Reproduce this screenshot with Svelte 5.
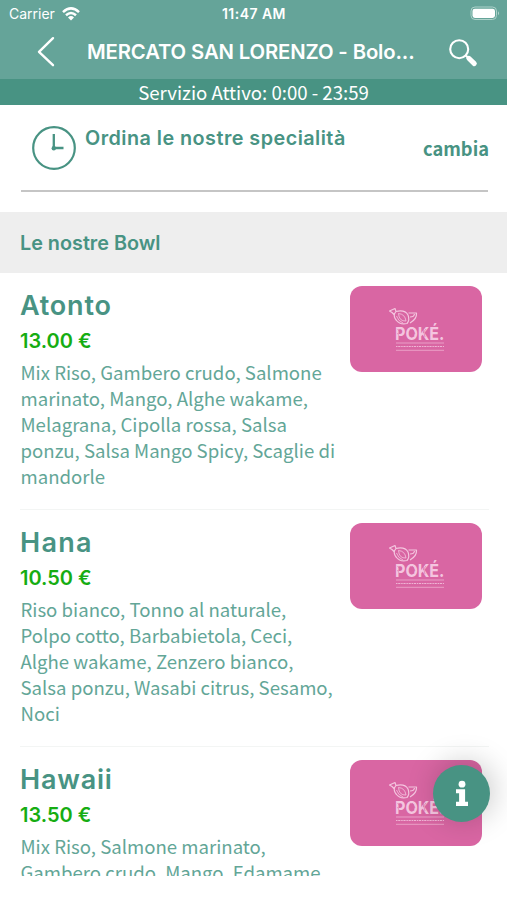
<script>
  const dishes = [
    {
      name: 'Atonto', price: '13.00 €', nameSpacing: 0.8,
      lines: ['Mix Riso, Gambero crudo, Salmone', 'marinato, Mango, Alghe wakame,', 'Melagrana, Cipolla rossa, Salsa', 'ponzu, Salsa Mango Spicy, Scaglie di', 'mandorle']
    },
    {
      name: 'Hana', price: '10.50 €', nameSpacing: 1.3,
      lines: ['Riso bianco, Tonno al naturale,', 'Polpo cotto, Barbabietola, Ceci,', 'Alghe wakame, Zenzero bianco,', 'Salsa ponzu, Wasabi citrus, Sesamo,', 'Noci']
    },
    {
      name: 'Hawaii', price: '13.50 €', nameSpacing: 0.8,
      lines: ['Mix Riso, Salmone marinato,', 'Gambero crudo, Mango, Edamame']
    }
  ];
</script>

<div class="screen">
  <header>
    <div class="status">
      <span class="carrier">Carrier</span>
      <svg class="wifi" width="18" height="14" viewBox="0 0 18 14" fill="none" stroke="#fff" stroke-width="2.5">
        <path d="M1 5.1Q9-2.3 17 5.1M4 8.3Q9 3.8 14 8.3" />
        <path d="M6 10.4Q9 7.8 12 10.4L9 13.5Z" fill="#fff" stroke="none" />
      </svg>
      <span class="time">11:47 AM</span>
      <svg class="battery" width="30" height="15" viewBox="0 0 30 15">
        <rect x="1" y="1" width="25.5" height="12.5" rx="4" fill="none" stroke="#add2ca" stroke-width="1" />
        <rect x="2.5" y="2.7" width="22.5" height="9.2" rx="2.4" fill="#fff" />
        <path d="M28 5.2Q30 7.3 28 9.3Z" fill="#b4d6ce" />
      </svg>
    </div>
    <div class="nav">
      <svg class="back" width="18" height="31" viewBox="0 0 18 31" fill="none" stroke="#fff" stroke-width="2.4" stroke-linecap="round" stroke-linejoin="round">
        <path d="M16 2.2L2 15.8L16 29.2" />
      </svg>
      <h1>MERCATO SAN LORENZO - Bolo...</h1>
      <svg class="search" width="30" height="30" viewBox="0 0 30 30" fill="none" stroke="#fff">
        <circle cx="11.2" cy="11.2" r="9" stroke-width="2.1" />
        <path d="M17.8 17.5L21 20.5" stroke-width="2.2" />
        <path d="M20.8 20.3L26.3 25.6" stroke-width="5" stroke-linecap="round" />
      </svg>
    </div>
    <div class="service"><span>Servizio Attivo: 0:00 - 23:59</span></div>
  </header>

  <main>
    <section class="order">
      <svg class="clock" width="46" height="46" viewBox="0 0 46 46" fill="none" stroke="#489383">
        <circle cx="23" cy="23" r="20.8" stroke-width="2.2" />
        <path d="M22.8 9V23H32.5" stroke-width="2.3" />
        <circle cx="22.8" cy="23.2" r="2.2" fill="#489383" stroke="none" />
      </svg>
      <strong>Ordina le nostre specialità</strong>
      <span class="change">cambia</span>
    </section>
    <h2><span>Le nostre Bowl</span></h2>
    {#each dishes as dish}
      <article>
        <div class="details">
          <h3 style:letter-spacing="{dish.nameSpacing}px">{dish.name}</h3>
          <div class="price">{dish.price}</div>
          <p>{#each dish.lines as line}<span>{line}</span>{/each}</p>
        </div>
        <div class="thumb">
          <svg width="132" height="86" viewBox="0 0 132 86">
            <g fill="none" stroke="#f4c5df" stroke-width="1.2" stroke-linejoin="round">
              <path d="M39.5 25L45 22.5L46 25.5L44 28.5L42 26.5Z" />
              <path d="M46 25.5Q55 23.5 58 29Q60 34 57 37.5Q50 39 46.5 34.5Q43.5 31 44.5 28" />
              <path d="M48.5 27.5Q55 28 56 35Q49 35.5 48.5 27.5M46.5 30Q48 35 53 37" stroke-width=".8" />
              <path d="M58.5 27H66.5Q67 33 60 37M60 31Q64 31 64.5 28" />
            </g>
            <text class="brand" x="45" y="54.3" textLength="49.5" lengthAdjust="spacingAndGlyphs">POKÉ.</text>
            <path d="M47.5 43L50 46M47.5 47L49 50M60 43L64 51M62 43L65 48M73 43L75 51M76 43L73 47" stroke="#d966a3" stroke-width=".6" />
            <path d="M46 57H94M46 64.3H94" stroke="#efadd0" stroke-width=".8" />
            <path d="M46 60.5H94" stroke="#efb5d5" stroke-width="1.2" stroke-dasharray="1.5 .7 2.2 .8" />
          </svg>
        </div>
      </article>
    {/each}
  </main>
  <button class="info" aria-label="Info">
    <svg width="14" height="27" viewBox="0 0 14 27" fill="#fff">
      <circle cx="7" cy="4.2" r="3.4" />
      <path d="M1 9.3H10.1V21.7H13V26H1V21.7H4.1V13.3H1Z" />
    </svg>
  </button>
</div>

<style>
  :global(body) { margin: 0; background: #fff; }
  .screen { position: relative; width: 507px; height: 900px; overflow: hidden; background: #fff; color: #489383; font-family: "Noto Sans CJK SC", "Noto Sans", sans-serif; }
  h1, h2, h3, p { margin: 0; }
  header { height: 105px; background: #65a499; color: #fff; }
  .status { display: flex; height: 28px; align-items: center; box-sizing: border-box; padding: 0 7px 0 9px; font: 14px/28px Inter, sans-serif; }
  .carrier { width: 53px; white-space: nowrap; }
  .wifi { margin-top: -1px; }
  .time { margin-left: 142px; font-size: 14px; font-weight: 600; letter-spacing: .45px; white-space: nowrap; }
  .battery { margin-left: auto; margin-top: -1px; }
  .nav { display: flex; height: 51px; align-items: center; }
  .back { margin: -4px 0 0 37px; }
  h1 { width: 330px; margin-left: 32px; padding-bottom: 4px; font: 600 20.3px/30px Inter, sans-serif; letter-spacing: -.13px; white-space: nowrap; box-sizing: border-box; margin-top: 1px; }
  .search { margin: -1px 0 0 31px; }
  .service { height: 26px; background: #489383; text-align: center; font-size: 18.6px; line-height: 25px; white-space: nowrap; }
  main { height: 771px; overflow: hidden; }
  .order { display: flex; align-items: flex-start; height: 87px; margin: 0 19px 20px 21px; box-sizing: border-box; border-bottom: 2px solid #c5c5c5; }
  .clock { flex: none; margin: 20px 0 0 10px; }
  strong { margin: 19px 0 0 8px; font: 600 19.8px/28px Inter, sans-serif; letter-spacing: .46px; white-space: nowrap; }
  .change { margin: 29px -1px 0 auto; font-size: 18.3px; font-weight: 700; line-height: 28px; }
  h2 { display: flex; align-items: center; height: 61px; box-sizing: border-box; padding-left: 20px; background: #eee; font: 600 19.8px/28px Inter, sans-serif; }
  article { display: flex; justify-content: space-between; height: 237px; margin-left: 20px; margin-right: 18px; padding-right: 7px; box-sizing: border-box; border-bottom: 1px solid #f3f5f4; }
  .details { width: 320px; padding-top: 14px; }
  h3 { font: 600 27px/38px Inter, sans-serif; }
  .price { height: 32px; font: 600 20px/32px Inter, sans-serif; color: #16ad12; white-space: nowrap; }
  p { margin-top: 2px; padding-left: .5px; font-size: 18.6px; line-height: 26px; color: #63a697; }
  p span { display: block; white-space: nowrap; }
  .thumb { flex: none; width: 132px; height: 86px; margin-top: 13px; border-radius: 12px; overflow: hidden; background: #d966a3; }
  .thumb svg { display: block; }
  .brand { font: 700 17.8px Inter, sans-serif; fill: #f4c5df; }
  .info { position: absolute; left: 433px; top: 765px; width: 57px; height: 57px; padding: 0; border: 0; border-radius: 50%; display: flex; align-items: center; justify-content: center; background: #489383; box-shadow: 3px -3px 30px rgba(0, 0, 0, .22); }
</style>
